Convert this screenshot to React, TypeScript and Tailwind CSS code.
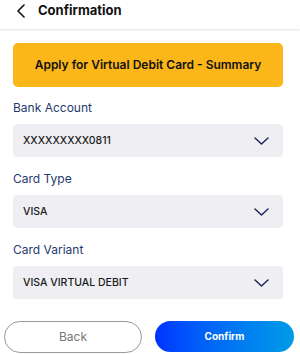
import React from 'react';

const Chevron: React.FC = () => (
    <svg width="15" height="8" viewBox="0 0 15 8" fill="none" className="shrink-0">
        <path d="M1 1l6.5 6L14 1" stroke="#1c2a5a" strokeWidth="1.5" strokeLinecap="round" strokeLinejoin="round" />
    </svg>
);

const SelectField: React.FC<{ label: string; value: string }> = ({ label, value }) => (
    <div className="flex flex-col">
        <div className="text-[12px] text-[#1f3a70] leading-[16px] h-[16px] mb-[8px]">{label}</div>
        <div className="h-[33px] bg-[#efeef3] rounded-[4px] flex items-center justify-between pl-[10px] pr-[14px]">
            <span className="text-[10.5px] font-medium text-[#1a1a1a]">{value}</span>
            <Chevron />
        </div>
    </div>
);

export default function App() {
    return (
        <div className="w-[300px] h-[354px] bg-white overflow-hidden flex flex-col" style={{ fontFamily: 'Inter, "Noto Sans", sans-serif' }}>
            {/* header */}
            <div className="h-[29px] flex items-center pb-[8px] shadow-[0_1px_2px_rgba(0,0,0,0.12)] shrink-0">
                <svg width="10" height="14" viewBox="0 0 10 14" fill="none" className="ml-[16px]">
                    <path d="M8 1L2 7l6 6" stroke="#111" strokeWidth="1.6" strokeLinecap="round" strokeLinejoin="round" />
                </svg>
                <span className="ml-[12px] text-[13px] font-bold text-[#111]">Confirmation</span>
            </div>

            <div className="pl-[13px] pr-[17px] pt-[14px] flex flex-col">
                <div className="h-[44px] bg-[#fbb619] rounded-[5px] flex items-center justify-center">
                    <span className="text-[12px] font-semibold text-[#111]">Apply for Virtual Debit Card - Summary</span>
                </div>

                <div className="flex flex-col gap-[14px] mt-[13px]">
                    <SelectField label="Bank Account" value="XXXXXXXXX0811" />
                    <SelectField label="Card Type" value="VISA" />
                    <SelectField label="Card Variant" value="VISA VIRTUAL DEBIT" />
                </div>
            </div>

            <div className="flex gap-[13px] px-[4px] mt-[22px]">
                <button className="w-[138px] h-[32px] rounded-full border border-[#9a9a9a] bg-white text-[12px] text-[#777]">
                    Back
                </button>
                <button className="w-[139px] h-[31px] rounded-full bg-gradient-to-r from-[#0030ff] to-[#009be6] text-[10px] font-bold text-white">
                    Confirm
                </button>
            </div>
        </div>
    );
}
